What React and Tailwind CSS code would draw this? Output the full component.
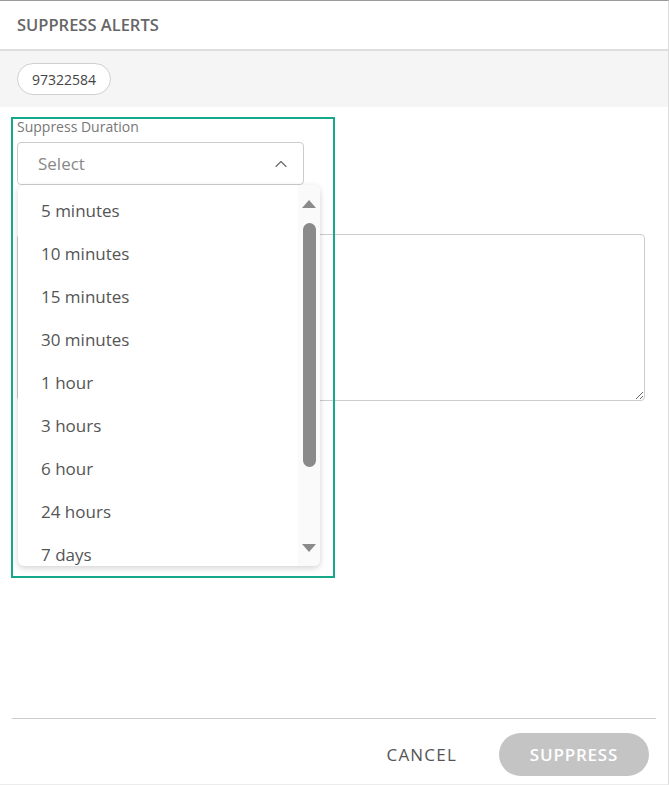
import { ChevronUp } from "lucide-react";

const options = [
    "5 minutes",
    "10 minutes",
    "15 minutes",
    "30 minutes",
    "1 hour",
    "3 hours",
    "6 hour",
    "24 hours",
    "7 days",
];

const SuppressAlerts = () => {
    return (
        <div className="w-[669px] h-[785px] bg-white border-t border-t-[#9a9a9a] border-r border-r-[#dcdcdc] border-b border-b-[#ececec] flex flex-col font-['Open_Sans',sans-serif]">
            {/* Header */}
            <div className="h-[50px] flex items-center px-[17px] border-b-2 border-[#dedede]">
                <h2 className="text-[16.5px] font-semibold text-[#666]">SUPPRESS ALERTS</h2>
            </div>

            {/* Selected alerts */}
            <div className="h-[56px] bg-[#f5f5f5] flex items-center px-[17px]">
                <span className="h-[32px] px-[14px] flex items-center rounded-full border border-[#cfcfcf] bg-white text-[14px] text-[#444]">
                    97322584
                </span>
            </div>

            {/* Form */}
            <div className="relative flex-1 px-[17px] pt-[12px]">
                {/* highlight box */}
                <div className="absolute left-[11px] top-[10px] w-[324px] h-[461px] border-2 border-[#16a88a] pointer-events-none z-20" />

                <label className="block text-[14px] leading-[16px] text-[#777]">Suppress Duration</label>
                <div className="relative mt-[7px] w-[287px]">
                    <div className="h-[43px] border border-[#cccccc] rounded-[4px] flex items-center justify-between pl-[20px] pr-[12px]">
                        <span className="text-[17px] text-[#888]">Select</span>
                        <ChevronUp size={20} strokeWidth={1.3} className="text-[#666]" />
                    </div>

                    {/* Dropdown */}
                    <div className="absolute left-[1px] top-[43px] w-[302px] h-[381px] bg-white rounded-[6px] shadow-[0_2px_6px_rgba(0,0,0,0.18)] z-10 flex overflow-hidden">
                        <ul className="flex-1 pt-[4px]">
                            {options.map((item, index) => (
                                <li key={index} className="h-[43px] flex items-center pl-[23px] text-[17px] text-[#555]">
                                    {item}
                                </li>
                            ))}
                        </ul>
                        <div className="w-[22px] bg-[#fafafa] flex flex-col items-center pt-[15px] pb-[14px]">
                            <svg width="14" height="8" viewBox="0 0 14 8"><polygon points="7,0 14,8 0,8" fill="#8a8a8a" /></svg>
                            <div className="mt-[15px] w-[13px] h-[244px] rounded-full bg-[#8a8a8a]" />
                            <div className="flex-1" />
                            <svg width="14" height="8" viewBox="0 0 14 8"><polygon points="0,0 14,0 7,8" fill="#8a8a8a" /></svg>
                        </div>
                    </div>
                </div>

                <textarea className="mt-[49px] w-[628px] h-[167px] border border-[#cccccc] rounded-[4px] resize-y outline-none" />
            </div>

            {/* Footer */}
            <div className="mx-[12px] border-t border-[#cccccc]" />
            <div className="h-[65px] pt-[6px] flex items-center justify-end gap-[42px] pr-[19px]">
                <button className="text-[17px] text-[#555] tracking-[1.2px]">CANCEL</button>
                <button className="h-[43px] w-[150px] rounded-full bg-[#c4c4c4] text-white text-[17px] font-semibold tracking-[0.8px]">
                    SUPPRESS
                </button>
            </div>
        </div>
    );
};

export default function App() {
    return <SuppressAlerts />;
}
